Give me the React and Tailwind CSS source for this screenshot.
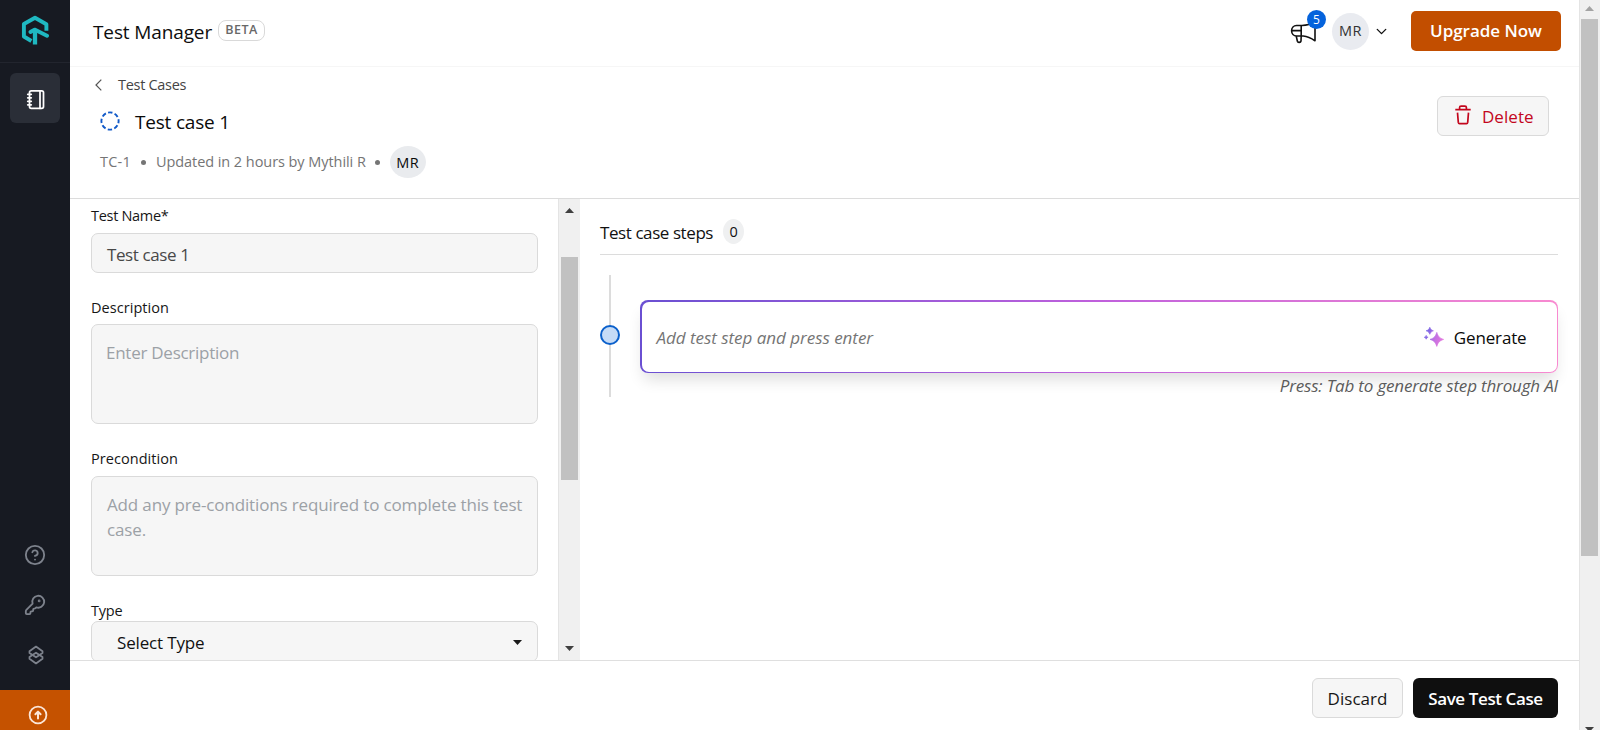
import { ChevronDown, CircleHelp, KeyRound, Notebook } from "lucide-react";

function Logo() {
  return (
    <svg width="28" height="30" viewBox="0 0 28 30" fill="none" stroke="#1fb8c1" strokeWidth="3.9" strokeLinejoin="round">
      <path d="M10.4 26 2.9 21.5V9L14 2.8l11.4 6.4v6.6" />
      <path d="M9.5 17 13.6 14.6 26 20.8" strokeLinecap="round" />
      <path d="M14 15v14.5" strokeWidth="4.3" />
    </svg>
  );
}

function LinkedLoops() {
  return (
    <svg width="16" height="20" viewBox="0 0 16 20" fill="none" stroke="#7d828c" strokeWidth="1.8" strokeLinejoin="round" strokeLinecap="round">
      <path d="M11.5 10l3-2V6.3L8 1.6 1.5 6.3V8L8 12.3l3.2-2" />
      <path d="M4.5 10l-3 2v1.7L8 18.4l6.5-4.7V12L8 7.7l-3.2 2" />
    </svg>
  );
}

function ArrowUpCircle() {
  return (
    <svg width="20" height="20" viewBox="0 0 20 20" fill="none" stroke="#fbe6d8" strokeWidth="1.8" strokeLinecap="round" strokeLinejoin="round">
      <circle cx="10" cy="10" r="8.4" />
      <path d="M10 13.4V7M7.4 9.2 10 6.6l2.6 2.6" strokeWidth="2" />
    </svg>
  );
}

function Megaphone() {
  return (
    <svg width="28" height="24" viewBox="0 0 28 24" fill="none" stroke="#111" strokeWidth="1.6" strokeLinejoin="round">
      <path d="M6.5 4.5h5.5C16.5 4.5 21 3.3 25 .8v19c-3.4-2.4-7.2-4.4-11.8-4.8H6.5c-2.8 0-4.9-2.2-4.9-5.200s2.100-5.300 4.900-5.300Z" />
      <path d="M11.2 4.5V15M1.7 9.6h9.5" />
      <path d="M6.2 15 7.4 20.300c.4 1.500 3.300 1.400 3.600-.3L11.200 15" />
    </svg>
  );
}

function Trash() {
  return (
    <svg width="16" height="20" viewBox="0 0 16 20" fill="none" stroke="#c3071d" strokeWidth="1.7" strokeLinejoin="round">
      <path d="M.3 4.6h15.4M4.6 4.4V2.6c0-.9.6-1.5 1.5-1.5h3.8c.9 0 1.5.6 1.5 1.5v1.8" />
      <path d="m2.5 7.6.8 9.800c.1.800.5 1.200 1.200 1.200h7c.7 0 1.100-.4 1.200-1.200l.8-9.800" />
    </svg>
  );
}

function Sparkles() {
  return (
    <svg width="20" height="20" viewBox="0 0 20 20">
      <defs>
        <linearGradient id="spark" gradientUnits="userSpaceOnUse" x1="0" y1="6" x2="20" y2="14">
          <stop stopColor="#6a63e6" />
          <stop offset=".6" stopColor="#c772e2" />
          <stop offset="1" stopColor="#e878dc" />
        </linearGradient>
      </defs>
      <g fill="url(#spark)" stroke="url(#spark)" strokeWidth=".7" strokeLinejoin="round">
        <path d="M12.8 5.4c1.500 4.400 2.600 5.500 6.800 7-4.200 1.500-5.300 2.600-6.800 7-1.500-4.400-2.600-5.500-6.800-7 4.200-1.500 5.300-2.600 6.800-7Z" />
        <path d="M5.800.3c.9 2.200 1.400 2.700 3.600 3.500-2.200.8-2.700 1.300-3.600 3.500C4.900 5.100 4.400 4.600 2.200 3.800 4.400 3 4.900 2.500 5.800.3Z" />
        <path d="M2.200 8.400c.500 1.200.8 1.500 1.900 1.900-1.100.4-1.400.7-1.900 1.900-.5-1.200-.8-1.500-1.900-1.900 1.100-.4 1.400-.7 1.900-1.900Z" />
      </g>
    </svg>
  );
}

function Triangle({ up, className }) {
  return (
    <svg width="9" height="5" viewBox="0 0 9 5" className={className}>
      <path fill="currentColor" d={up ? "M0 5 4.500 0 9 5Z" : "M0 0 4.500 5 9 0Z"} />
    </svg>
  );
}

function Sidebar() {
  return (
    <aside className="flex w-[70px] shrink-0 flex-col bg-[#171a22]">
      <div className="flex h-[63px] items-start border-b border-[#22252e] pl-[21px] pt-[15px]">
        <Logo />
      </div>
      <div className="ml-[10px] mt-[10px] flex size-[50px] items-center justify-center rounded-md bg-[#2a2e37] pl-[3px] pt-[3px]">
        <Notebook size={21} color="#fff" strokeWidth={2} />
      </div>
      <div className="mt-auto flex flex-col items-center pb-[25px]">
        <CircleHelp size={22} color="#7d828c" strokeWidth={2} />
        <KeyRound size={22} color="#7d828c" strokeWidth={2} className="mt-[28px]" />
        <div className="mt-[29px] pl-[2px]">
          <LinkedLoops />
        </div>
      </div>
      <div className="flex h-10 items-start justify-center bg-[#c55200] pl-[5px] pt-[15px]">
        <ArrowUpCircle />
      </div>
    </aside>
  );
}

function Header() {
  return (
    <header className="flex h-[67px] shrink-0 items-center border-b border-[#f6f6f6] pb-1 pl-[23px] pr-[18px]">
      <h1 className="pt-[2px] text-[19px] tracking-[-0.12px] text-[#0d0d0d]">Test Manager</h1>
      <span className="mb-[1px] ml-[6px] flex h-[21px] w-[47px] items-center justify-center rounded-lg border border-[#d9d9d9] text-[12.5px] font-semibold tracking-[0.5px] text-[#686868]">
        BETA
      </span>
      <div className="ml-auto flex items-center">
        <div className="relative mt-1">
          <Megaphone />
          <span className="absolute -top-[11px] left-[17px] flex size-[19px] items-center justify-center rounded-full bg-[#0563dc] text-[12px] text-white">
            5
          </span>
        </div>
        <span className="ml-[14px] flex size-[37px] items-center justify-center rounded-full bg-[#e9ebf0] text-[14.5px] tracking-[0.4px] text-[#333]">
          MR
        </span>
        <ChevronDown size={17} strokeWidth={1.9} className="ml-[4px] text-[#111]" />
        <button className="ml-[21px] flex h-10 w-[150px] items-center justify-center rounded-[5px] bg-[#c24e00] text-[17px] font-semibold tracking-[-0.03px] text-white">
          Upgrade Now
        </button>
      </div>
    </header>
  );
}

function TitleBar() {
  return (
    <section className="flex h-[132px] shrink-0 justify-between border-b border-[#dcdcdc] pr-[30px]">
      <div className="flex flex-col pt-[8px]">
        <div className="flex h-5 items-center pl-[25px] text-[14.5px] tracking-[-0.3px] text-[#444]">
          <svg width="7" height="12" viewBox="0 0 7 12" fill="none" stroke="#555" strokeWidth="1.2">
            <path d="M6.300.700 1 6l5.300 5.300" />
          </svg>
          <span className="ml-[16px]">Test Cases</span>
        </div>
        <div className="mt-[14px] flex h-[26px] items-center pl-[30px]">
          <svg width="20" height="20" viewBox="0 0 20 20" fill="none" stroke="#1059c8" strokeWidth="1.9" className="mb-[2px]">
            <circle cx="10" cy="10" r="8.6" strokeDasharray="4.4 2.354" strokeDashoffset="2.2" />
          </svg>
          <h2 className="ml-[15px] text-[19px] tracking-[-0.2px] text-[#0a0a0a]">Test case 1</h2>
        </div>
        <div className="mt-[11px] flex h-8 items-center pl-[30px] text-[14.5px] text-[#757575]">
          <span className="tracking-[0.2px]">TC-1</span>
          <span className="ml-[10px] size-[5px] rounded-full bg-[#757575]" />
          <span className="ml-[10px] tracking-[-0.06px]">Updated in 2 hours by Mythili R</span>
          <span className="ml-[9px] size-[5px] rounded-full bg-[#757575]" />
          <span className="ml-[10px] flex h-8 w-9 items-center justify-center rounded-[50%] bg-[#e9ebee] pt-[1px] tracking-[0.5px] text-[#0a0a0a]">
            MR
          </span>
        </div>
      </div>
      <button className="mt-[29px] flex h-10 w-[112px] items-center rounded-md border border-[#dadada] bg-[#f6f6f6] pl-[17px] text-[17px] tracking-[0.04px] text-[#c3071d]">
        <span className="mb-[2px]">
          <Trash />
        </span>
        <span className="ml-[11px] pt-[1px]">Delete</span>
      </button>
    </section>
  );
}

function Form() {
  const label = "h-5 text-[14.5px] leading-5 text-[#161616]";
  const field = "rounded-[7px] border border-[#dadada] bg-[#f6f6f6] pr-[15px] text-[17px]";
  return (
    <div className="flex w-[488px] shrink-0 flex-col overflow-hidden pl-[21px] pr-5 pt-[7px]">
      <div className={label + " tracking-[-0.3px]"}>Test Name*</div>
      <div className={field + " mt-[7px] flex h-10 shrink-0 items-center pl-[15px] pt-[3px] tracking-[-0.4px] text-[#484848]"}>
        Test case 1
      </div>
      <div className={label + " mt-[25px] tracking-[0.05px]"}>Description</div>
      <div className={field + " mt-[6px] h-[100px] shrink-0 pl-[14px] pt-[15px] leading-[25px] tracking-[-0.26px] text-[#9ca1a6]"}>
        Enter Description
      </div>
      <div className={label + " mt-[25px] tracking-[0.05px]"}>Precondition</div>
      <div className={field + " mt-[7px] h-[100px] shrink-0 whitespace-nowrap pl-[15px] pt-[15px] leading-[25px] tracking-[-0.15px] text-[#9ca1a6]"}>
        Add any pre-conditions required to complete this test
        <br />
        case.
      </div>
      <div className={label + " mt-[25px] tracking-[-0.2px]"}>Type</div>
      <div className={field + " flex h-[41px] shrink-0 items-center justify-between pl-[25px] tracking-[-0.16px] text-[#111]"}>
        <span className="pt-[3px]">Select Type</span>
        <Triangle className="mt-[2px] text-[#1a1a1a]" />
      </div>
    </div>
  );
}

function PanelScrollbar() {
  return (
    <div className="flex w-[22px] shrink-0 flex-col items-center border-l border-[#e4e4e4] bg-[#f0f0f0] pb-[9px] pt-[9px]">
      <Triangle up className="text-[#404040]" />
      <div className="mt-[44px] h-[223px] w-[17px] bg-[#c1c1c1]" />
      <Triangle className="mt-auto text-[#404040]" />
    </div>
  );
}

function Steps() {
  return (
    <div className="flex min-w-0 flex-1 flex-col pl-5 pr-[21px]">
      <div className="flex h-[56px] items-center border-b border-[#dcdcdc] pt-[11px]">
        <h3 className="pt-[2px] text-[17px] tracking-[-0.42px] text-[#111]">Test case steps</h3>
        <span className="mb-[1px] ml-[10px] flex h-[25px] w-[21px] items-center justify-center rounded-[50%] bg-[#eff0f1] text-[14.5px] text-[#111]">
          0
        </span>
      </div>
      <div className="mt-5 flex">
        <div className="flex h-[122px] w-5 shrink-0 flex-col items-center">
          <div className="h-[50px] w-[2px] bg-[#dcdcdc]" />
          <div className="size-5 rounded-full border-2 border-[#0b60cb] bg-[#c5dbf7]" />
          <div className="w-[2px] flex-1 bg-[#dcdcdc]" />
        </div>
        <div className="ml-5 flex-1 pt-[25px]">
          <div className="h-[73px] rounded-lg bg-linear-to-r from-[#6a4fd2] via-[#c060dc] to-[#f88ad0] p-[1.5px] shadow-[0_10px_16px_-4px_rgba(0,0,0,0.14)]">
            <div className="flex h-full items-center rounded-[7px] bg-white pl-[15px] pr-[30px] pt-[3px] text-[17px]">
              <span className="italic tracking-[-0.03px] text-[#757575]">Add test step and press enter</span>
              <span className="mb-[2px] ml-auto">
                <Sparkles />
              </span>
              <span className="ml-[10px] tracking-[-0.15px] text-[#0a0a0a]">Generate</span>
            </div>
          </div>
          <p className="mt-[1px] text-right text-[17px] italic leading-6 tracking-[-0.17px] text-[#5c5c5c]">
            Press: Tab to generate step through AI
          </p>
        </div>
      </div>
    </div>
  );
}

function Footer() {
  return (
    <footer className="flex h-[70px] shrink-0 justify-end gap-[10px] border-t border-[#dfdfdf] pr-[21px] pt-[17px] text-[17px]">
      <button className="h-10 w-[91px] rounded-md border border-[#dadada] bg-[#f6f6f6] pt-[2px] tracking-[0.02px] text-[#161616]">
        Discard
      </button>
      <button className="h-10 w-[145px] rounded-md bg-[#0f0f0f] pt-[2px] font-semibold tracking-[-0.4px] text-white">
        Save Test Case
      </button>
    </footer>
  );
}

function PageScrollbar() {
  return (
    <div className="flex w-[21px] shrink-0 flex-col items-center overflow-hidden border-l border-[#e4e4e4] bg-[#f0f0f0] pr-[2px] pt-[6px]">
      <Triangle up className="shrink-0 text-[#a3a3a3]" />
      <div className="mt-[8px] h-[537px] w-[17px] shrink-0 bg-[#c1c1c1]" />
      <Triangle className="-mb-[2px] mt-auto shrink-0 text-[#404040]" />
    </div>
  );
}

export default function App() {
  return (
    <div className="flex h-[730px] w-[1600px] overflow-hidden bg-white font-['Open_Sans','Noto_Sans',sans-serif]">
      <Sidebar />
      <main className="flex min-w-0 flex-1 flex-col">
        <Header />
        <TitleBar />
        <div className="flex h-[461px] shrink-0 overflow-hidden">
          <Form />
          <PanelScrollbar />
          <Steps />
        </div>
        <Footer />
      </main>
      <PageScrollbar />
    </div>
  );
}
